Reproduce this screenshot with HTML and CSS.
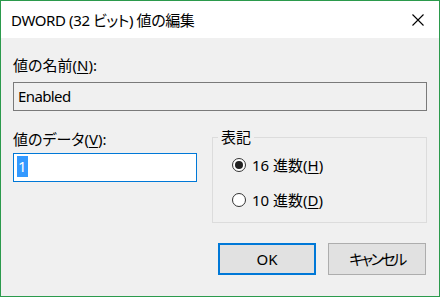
FILE: index.html
```html
<!DOCTYPE html>
<html lang="ja">
<head>
<meta charset="utf-8">
<link rel="stylesheet" href="styles.css">
</head>
<body>
<div class="window">
  <div class="titlebar">
    <span class="title">DWORD (32 ビット) 値の編集</span>
    <svg class="close" width="12" height="12" viewBox="0 0 12 12"><path d="M0.5 0.5 L11.5 11.5 M11.5 0.5 L0.5 11.5" stroke="#000" stroke-width="1.1" fill="none"/></svg>
  </div>
  <div class="content">
    <div class="label name-label">値の名前(<u>N</u>):</div>
    <div class="namebox">Enabled</div>
    <div class="row">
      <div class="datacol">
        <div class="label">値のデータ(<u>V</u>):</div>
        <div class="databox"><span class="sel">1</span></div>
      </div>
      <fieldset class="group">
        <legend>表記</legend>
        <div class="radio"><span class="dot checked"></span><span>16 進数(<u>H</u>)</span></div>
        <div class="radio"><span class="dot"></span><span>10 進数(<u>D</u>)</span></div>
      </fieldset>
    </div>
    <div class="buttons">
      <div class="btn default">OK</div>
      <div class="btn kana">キャンセル</div>
    </div>
  </div>
</div>
</body>
</html>
```
FILE: styles.css
```css
* { box-sizing: border-box; }
html, body { margin: 0; padding: 0; background: #f0f0f0; }
body {
  font-family: "Noto Sans", "Noto Sans CJK JP", sans-serif;
  font-size: 15px;
  line-height: 20px;
  color: #000;
  font-feature-settings: "palt";
}
.window {
  width: 440px;
  height: 297px;
  border: 1px solid #2b9a4c;
  display: flex;
  flex-direction: column;
  background: #f0f0f0;
}
.titlebar {
  height: 37px;
  background: #fff;
  display: flex;
  align-items: center;
  justify-content: space-between;
  padding: 0 15px 0 10px;
}
.title { font-size: 15px; letter-spacing: -0.4px; }
.close { display: block; }
.content {
  flex: 1;
  padding: 17px 12px 0 12px;
  display: flex;
  flex-direction: column;
}
.label { height: 20px; }
.namebox {
  margin-top: 7px;
  height: 29px;
  width: 414px;
  border: 1px solid #7a7a7a;
  background: #f0f0f0;
  padding: 3px 4px;
  letter-spacing: -0.6px;
}
.row {
  display: flex;
  margin-top: 16px;
  align-items: flex-start;
}
.datacol {
  width: 184px;
  margin-top: 2px;
}
.databox {
  margin-top: 4px;
  height: 29px;
  border: 1px solid #0078d7;
  background: #fff;
  padding: 2px 3px;
}
.sel {
  display: inline-block;
  background: #3399ff;
  color: #fff;
  height: 21px;
  line-height: 21px;
  padding: 0 1px;
}
.group {
  margin: 0 0 0 15px;
  width: 215px;
  height: 96px;
  border: 1px solid #dcdcdc;
  padding: 0 0 0 19px;
}
.group legend {
  padding: 0 3px;
  margin-left: -14px;
  line-height: 20px;
}
.radio {
  display: flex;
  align-items: center;
  gap: 6px;
  height: 35px;
}
.dot {
  width: 14px;
  height: 14px;
  border-radius: 50%;
  border: 1px solid #333;
  background: #fff;
  display: flex;
  align-items: center;
  justify-content: center;
}
.dot.checked::after {
  content: "";
  width: 8px;
  height: 8px;
  border-radius: 50%;
  background: #222;
}
.buttons {
  margin-top: 20px;
  display: flex;
  justify-content: flex-end;
  gap: 12px;
  padding-right: 1px;
}
.btn {
  width: 98px;
  height: 32px;
  background: #e1e1e1;
  border: 1px solid #adadad;
  display: flex;
  align-items: center;
  justify-content: center;
}
.btn.kana { letter-spacing: -2.5px; }
.btn.default { border: 2px solid #0078d7; }
u { text-underline-offset: 2px; }
```
